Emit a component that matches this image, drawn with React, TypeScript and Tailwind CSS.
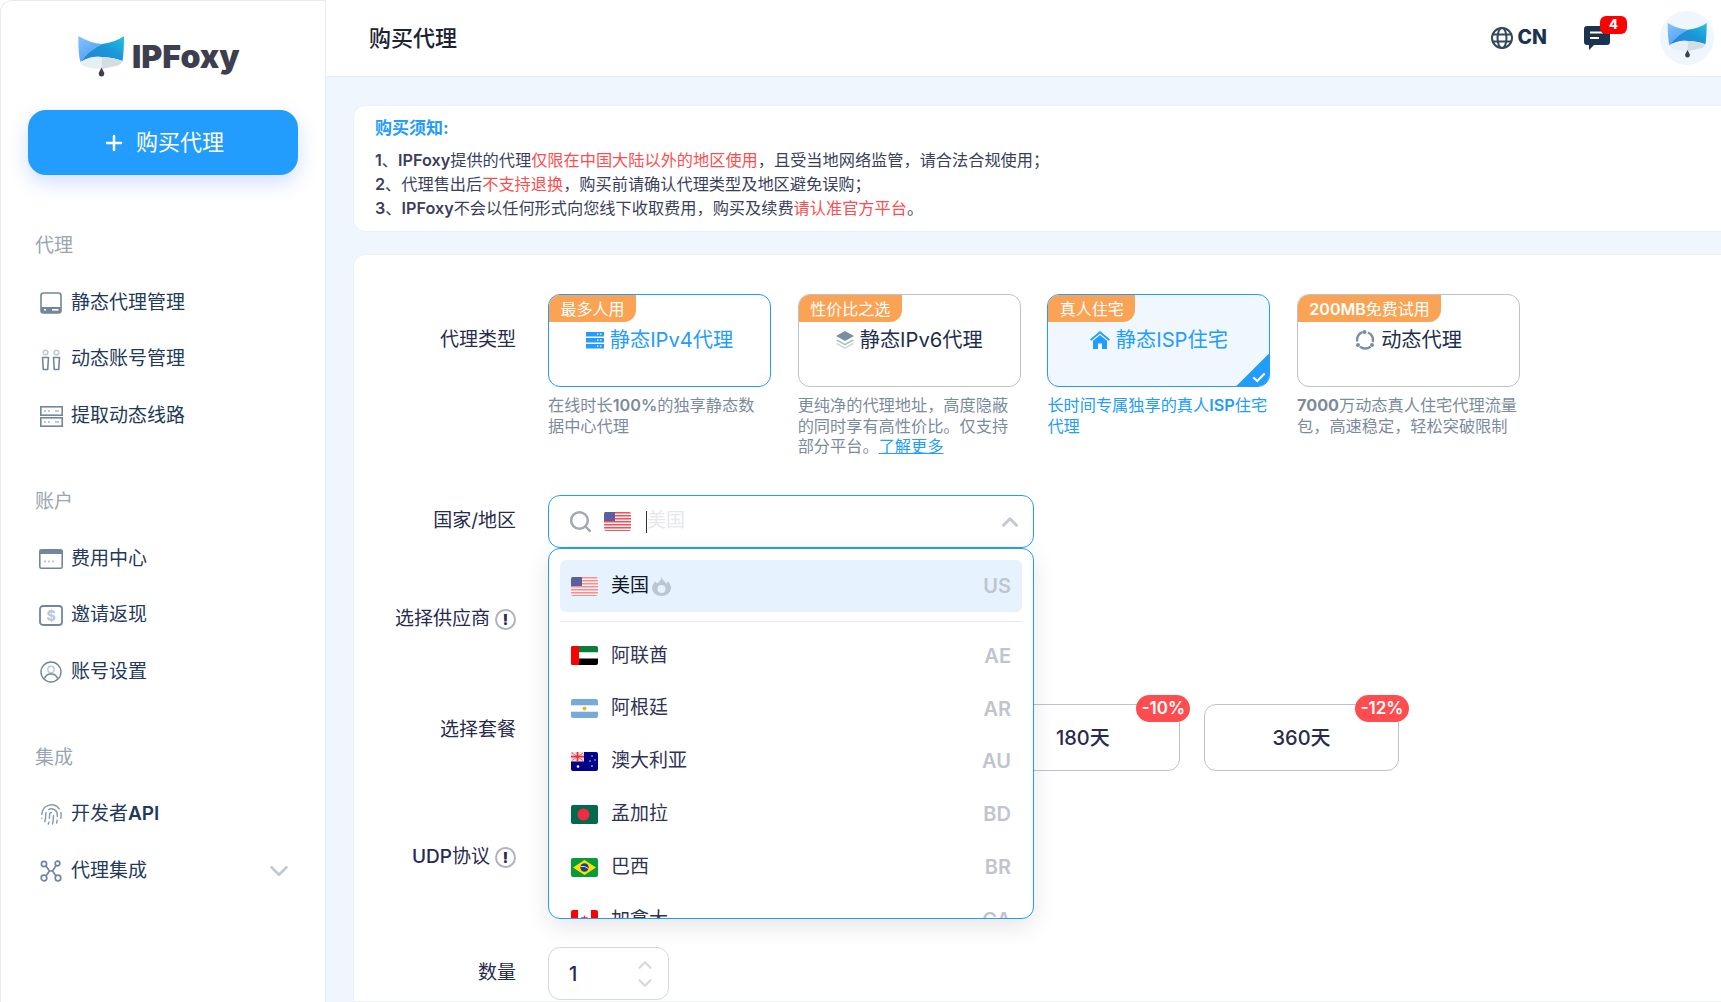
import { ChevronDown, ChevronUp, Fingerprint, Plus, Search } from "lucide-react";
import type { ReactNode } from "react";

function FoxLogo({ className }: { className: string }) {
  return (
    <svg viewBox="0 0 47 41" className={className}>
      <defs>
        <linearGradient id="foxLeft" x1="0" y1="0" x2="0.6" y2="1">
          <stop offset="0" stopColor="#86c3ff" />
          <stop offset="1" stopColor="#4a9ff0" />
        </linearGradient>
        <linearGradient id="foxArch" x1="0" y1="1" x2="1" y2="0">
          <stop offset="0" stopColor="#2a7fd8" />
          <stop offset="0.55" stopColor="#1a96d8" />
          <stop offset="1" stopColor="#22c4dc" />
        </linearGradient>
      </defs>
      <path d="M0.3 0 Q12 7 24 8 Q11 14 2.5 26 Q0.300 20 0.300 0 Z" fill="url(#foxLeft)" />
      <path d="M46 0 Q38 6 24 8 Q11 14 2.500 26 Q13 19.500 24 21 Q36 21.500 44.500 25 Q46 15 46 0 Z" fill="url(#foxArch)" />
      <path d="M2.500 26 Q13 19.500 24 21 L23.500 33 Q10 33 4 29 Z" fill="#e6f0f4" />
      <path d="M24 21 Q36 21.500 44.500 25 Q43 29 38 30 L23.500 33 Z" fill="#d4dde0" />
      <path d="M23.500 31.500 L26.300 37 Q26.300 40.500 23.500 40.500 Q20.700 40.500 20.700 37 Z" fill="#3d3f4f" />
    </svg>
  );
}

const ICON_DARK = "#73869c";
const ICON_LIGHT = "#bccad8";

function DriveIcon() {
  return (
    <svg viewBox="0 0 22 22" className="size-[22px]">
      <rect x="1" y="1" width="20" height="20" rx="2.5" fill="none" stroke={ICON_DARK} strokeWidth="1.6" />
      <path d="M1 15h20v3.5a2.5 2.5 0 0 1-2.5 2.5h-15A2.5 2.5 0 0 1 1 18.5Z" fill={ICON_DARK} />
      <rect x="4" y="17" width="2" height="1.6" fill="#fff" />
      <rect x="12" y="17" width="6.5" height="1.6" fill="#fff" />
    </svg>
  );
}

function AccountsIcon() {
  return (
    <svg viewBox="0 0 22 22" className="size-[22px]" fill="none">
      <circle cx="5.5" cy="3.5" r="2.3" stroke={ICON_LIGHT} strokeWidth="1.6" />
      <circle cx="16.5" cy="3.5" r="2.3" stroke={ICON_LIGHT} strokeWidth="1.6" />
      <path d="M2.5 8.5h6l-.8 12h-4.4Z" stroke={ICON_DARK} strokeWidth="1.6" strokeLinejoin="round" />
      <path d="M13.5 8.5h6l-.8 12h-4.4Z" stroke={ICON_DARK} strokeWidth="1.6" strokeLinejoin="round" />
    </svg>
  );
}

function ServerRowsIcon() {
  return (
    <svg viewBox="0 0 23 21" className="h-[21px] w-[23px]">
      <rect x="0.8" y="0.8" width="21.4" height="8.4" fill="none" stroke={ICON_DARK} strokeWidth="1.6" />
      <rect x="0.8" y="11.8" width="21.4" height="8.4" fill="none" stroke={ICON_DARK} strokeWidth="1.6" />
      <path d="M4 5h2M8 5h2M15 5h4M4 16h2M8 16h2M15 16h4" stroke={ICON_LIGHT} strokeWidth="2" />
    </svg>
  );
}

function BillingIcon() {
  return (
    <svg viewBox="0 0 24 20" className="h-[20px] w-[24px]">
      <rect x="0.8" y="0.8" width="22.4" height="18.4" rx="1.5" fill="none" stroke={ICON_DARK} strokeWidth="1.6" />
      <rect x="1" y="1" width="22" height="4" fill={ICON_DARK} />
      <path d="M5 12.5h2M9 12.5h2M13 12.5h2" stroke={ICON_LIGHT} strokeWidth="1.8" />
    </svg>
  );
}

function InviteIcon() {
  return (
    <svg viewBox="0 0 24 21" className="h-[21px] w-[24px]">
      <rect x="1" y="1" width="22" height="19" rx="3" fill="none" stroke={ICON_DARK} strokeWidth="1.8" />
      <text x="12" y="16" textAnchor="middle" fontSize="14" fontWeight="800" fill={ICON_LIGHT} fontFamily="Inter">
        $
      </text>
    </svg>
  );
}

function UserCircleIcon() {
  return (
    <svg viewBox="0 0 22 22" className="size-[22px]" fill="none">
      <circle cx="11" cy="11" r="10" stroke={ICON_DARK} strokeWidth="1.4" />
      <circle cx="11" cy="8.5" r="3.2" stroke={ICON_LIGHT} strokeWidth="1.4" />
      <path d="M4.5 17.5c1-3 3.5-4.5 6.5-4.5s5.500 1.500 6.500 4.500" stroke={ICON_DARK} strokeWidth="1.4" />
    </svg>
  );
}

function IntegrationIcon() {
  return (
    <svg viewBox="0 0 22 22" className="size-[22px]" fill="none" stroke={ICON_DARK} strokeWidth="1.7">
      <circle cx="4" cy="4" r="2.6" />
      <circle cx="17.500" cy="3.500" r="2.300" />
      <circle cx="4" cy="18" r="2.800" />
      <circle cx="18" cy="18" r="2.800" />
      <path d="M6 6l3.500 5-3.500 5M16 5.500l-3.500 5.500 3.500 5M9.500 11h3" />
    </svg>
  );
}

function InfoDot() {
  return (
    <span className="flex size-[21px] shrink-0 items-center justify-center rounded-full border-[2.500px] border-[#b0b3c1] text-[14px] leading-none font-black text-[#272b4d]">
      !
    </span>
  );
}

function ServerIcon() {
  return (
    <svg viewBox="0 0 18 17" className="h-[17px] w-[18px]">
      <path d="M0 0h18v4.500H0ZM0 6h18v4.500H0ZM0 12h18v4.500H0Z" fill="#229cfd" />
      <path d="M11 2.200h1.500M14 2.200h1.500M11 8.200h1.500M14 8.200h1.500M11 14.200h1.500M14 14.200h1.500" stroke="#fff" strokeWidth="1.300" />
    </svg>
  );
}

function LayersIcon() {
  return (
    <svg viewBox="0 0 18 18" className="size-[18px]">
      <path d="M9 0l9 5-9 5-9-5Z" fill="#7a8ea3" />
      <path d="M1.500 8.500L9 12.800l7.500-4.300L18 9.500l-9 5-9-5Z" fill="#aebccb" />
      <path d="M1.500 12L9 16.300l7.500-4.300L18 13l-9 5-9-5Z" fill="#ccd7e2" />
    </svg>
  );
}

function HouseIcon() {
  return (
    <svg viewBox="0 0 20 18" className="h-[18px] w-[20px]">
      <path d="M10 0L20 8.500l-1.300 1.300L10 2.500 1.300 9.800 0 8.500Z" fill="#229cfd" />
      <path d="M10 4l7 5.800V18h-5v-5.500H8V18H3V9.800Z" fill="#229cfd" />
    </svg>
  );
}

function RotationIcon() {
  return (
    <svg viewBox="0 0 20 20" className="size-[20px]" fill="none" stroke="#7a8ea3" strokeWidth="2.400">
      <path d="M7.500 2.200A8 8 0 0 0 2.200 11.500" />
      <path d="M13 2.500a8 8 0 0 1 4.800 9.500" />
      <path d="M5 16.600a8 8 0 0 0 10.500 0" />
      <circle cx="9.500" cy="2" r="2" fill="#7a8ea3" stroke="none" />
      <circle cx="3" cy="15" r="2" fill="#7a8ea3" stroke="none" />
      <circle cx="17" cy="15" r="2" fill="#7a8ea3" stroke="none" />
    </svg>
  );
}

function FlagUS({ muted }: { muted?: boolean }) {
  const stripe = muted ? "#f58f8f" : "#e8555c";
  return (
    <svg viewBox="0 0 27 19" className="h-[19px] w-[27px] rounded-[2px]">
      <rect width="27" height="19" fill="#fdf2f2" />
      {[0, 3, 6, 9, 12, 15, 18].map((y) => (
        <rect key={y} y={y} width="27" height="1.500" fill={stripe} />
      ))}
      <rect width="11" height="9" fill="#5c5f9f" />
    </svg>
  );
}

function FlagAE() {
  return (
    <svg viewBox="0 0 27 19" className="h-[19px] w-[27px] rounded-[2px]">
      <rect width="27" height="6.500" fill="#0c7d38" />
      <rect y="6.500" width="27" height="6" fill="#fff" />
      <rect y="12.500" width="27" height="6.500" fill="#000" />
      <rect width="8" height="19" fill="#f00" />
    </svg>
  );
}

function FlagAR() {
  return (
    <svg viewBox="0 0 27 19" className="h-[19px] w-[27px] rounded-[2px]">
      <rect width="27" height="19" fill="#75aadb" />
      <rect y="6.300" width="27" height="6.400" fill="#fff" />
      <circle cx="13.500" cy="9.500" r="2" fill="#f6b40e" />
    </svg>
  );
}

function FlagAU() {
  return (
    <svg viewBox="0 0 27 19" className="h-[19px] w-[27px] rounded-[2px]">
      <rect width="27" height="19" fill="#00008b" />
      <rect width="13" height="9.500" fill="#f3dede" />
      <path d="M6.500 0v9.500M0 4.700h13" stroke="#e8303c" strokeWidth="1.800" />
      <path d="M1 1l11 7.500M12 1L1 8.500" stroke="#e8303c" strokeWidth="0.700" />
      <circle cx="7" cy="14.500" r="1.300" fill="#fff" />
      <circle cx="21" cy="4" r="0.700" fill="#fff" />
      <circle cx="24" cy="8" r="0.700" fill="#fff" />
      <circle cx="19" cy="9" r="0.700" fill="#fff" />
      <circle cx="21" cy="14" r="0.800" fill="#fff" />
    </svg>
  );
}

function FlagBD() {
  return (
    <svg viewBox="0 0 27 19" className="h-[19px] w-[27px] rounded-[2px]">
      <rect width="27" height="19" fill="#006a4e" />
      <circle cx="12.500" cy="9.500" r="6" fill="#f42a41" />
    </svg>
  );
}

function FlagBR() {
  return (
    <svg viewBox="0 0 27 19" className="h-[19px] w-[27px] rounded-[2px]">
      <rect width="27" height="19" fill="#069c3a" />
      <path d="M13.500 2L25 9.500 13.500 17 2 9.500Z" fill="#fedf00" />
      <circle cx="13.500" cy="9.500" r="4.200" fill="#1d3f8f" />
      <path d="M9.500 8.500q4-1 8 2" stroke="#fff" strokeWidth="0.800" fill="none" />
    </svg>
  );
}

function FlagCA() {
  return (
    <svg viewBox="0 0 27 19" className="h-[19px] w-[27px] rounded-[2px]">
      <rect width="27" height="19" fill="#fff" />
      <rect width="7" height="19" fill="#f00" />
      <rect x="20" width="7" height="19" fill="#f00" />
      <path d="M13.500 5l1.200 2.500 2-.8-.8 4h-4.800l-.8-4 2 .8ZM13 11h1v3h-1Z" fill="#e8303c" />
    </svg>
  );
}

function NavItem({ icon, children, trailing }: { icon: ReactNode; children: ReactNode; trailing?: ReactNode }) {
  return (
    <div className="flex h-[56.700px] items-center text-[19px] text-[#23395a]">
      <span className="flex w-[70px] shrink-0 justify-end pr-[8px]">
        <span className="flex w-[24px] justify-center">{icon}</span>
      </span>
      <span className="flex-1">{children}</span>
      {trailing}
    </div>
  );
}

function NavHeading({ children }: { children: ReactNode }) {
  return <div className="flex h-[56.700px] items-center pl-[34px] text-[19px] text-[#9aa5b1]">{children}</div>;
}

function Sidebar() {
  return (
    <aside className="flex h-full w-[326px] shrink-0 flex-col rounded-tl-[12px] border-t border-r border-l border-[#e8eaee] bg-white">
      <div className="flex h-[109px] items-start gap-[7px] pt-[35px] pl-[77px]">
        <FoxLogo className="h-[41px] w-[47px]" />
        <span className="pt-[2px] text-[32px] leading-[38px] font-black text-[#3d3f4f]">IPFoxy</span>
      </div>
      <button className="mx-[27px] flex h-[65px] items-center justify-center gap-[10px] rounded-[18px] bg-[#229cfd] text-[22px] text-white shadow-[0_8px_20px_rgba(60,110,250,0.22)]">
        <Plus className="size-[24px]" strokeWidth={2.500} />
        购买代理
      </button>
      <div className="mt-[43px]">
        <NavHeading>代理</NavHeading>
        <NavItem icon={<DriveIcon />}>静态代理管理</NavItem>
        <NavItem icon={<AccountsIcon />}>动态账号管理</NavItem>
        <NavItem icon={<ServerRowsIcon />}>提取动态线路</NavItem>
      </div>
      <div className="mt-[29px]">
        <NavHeading>账户</NavHeading>
        <NavItem icon={<BillingIcon />}>费用中心</NavItem>
        <NavItem icon={<InviteIcon />}>邀请返现</NavItem>
        <NavItem icon={<UserCircleIcon />}>账号设置</NavItem>
      </div>
      <div className="mt-[29px]">
        <NavHeading>集成</NavHeading>
        <NavItem icon={<Fingerprint className="size-[23px] text-[#8b9aac]" strokeWidth={1.500} />}>
          开发者<span className="font-semibold">API</span>
        </NavItem>
        <NavItem
          icon={<IntegrationIcon />}
          trailing={<ChevronDown className="mr-[31px] size-[30px] text-[#c0c8d2]" strokeWidth={2} />}
        >
          代理集成
        </NavItem>
      </div>
    </aside>
  );
}

function TopBar() {
  return (
    <header className="flex h-[77px] shrink-0 items-center border-b border-[#e9edf2] bg-white pl-[43px]">
      <h1 className="flex-1 text-[22px] font-medium text-[#1c2433]">购买代理</h1>
      <svg viewBox="0 0 22 22" className="size-[22px]" fill="none" stroke="#33475f" strokeWidth="2">
        <circle cx="11" cy="11" r="10" />
        <ellipse cx="11" cy="11" rx="4.500" ry="10" />
        <path d="M1.500 7.500h19M1.500 14.500h19" />
      </svg>
      <span className="ml-[5px] text-[19.500px] font-extrabold text-[#1c3350]">CN</span>
      <div className="relative ml-[37px] h-[24px] w-[26px]">
        <svg viewBox="0 0 26 24" className="h-[24px] w-[26px]">
          <path d="M3 0h20a3 3 0 0 1 3 3v13a3 3 0 0 1-3 3H10l-5 5v-5H3a3 3 0 0 1-3-3V3a3 3 0 0 1 3-3Z" fill="#1c3350" />
          <path d="M6 6.500h13M6 12h9" stroke="#fff" strokeWidth="2" />
        </svg>
        <span className="absolute top-[-10px] left-[16px] flex h-[18px] w-[27px] items-center justify-center rounded-[6px] bg-[#f00] text-[13px] font-extrabold text-white">
          4
        </span>
      </div>
      <div className="mr-[7px] ml-[50px] flex size-[54px] items-center justify-center rounded-full bg-[#eff6fe] pt-[4px]">
        <FoxLogo className="h-[35px] w-[41px]" />
      </div>
    </header>
  );
}

function Notice() {
  return (
    <section className="mt-[28px] mr-[-20px] ml-[27px] rounded-l-[12px] border border-[#edf0f4] bg-white pt-[10px] pb-[11px] pl-[21px] text-[16.200px] leading-[24px] text-[#3a3f5c]">
      <div className="mb-[8px] text-[17px] font-bold text-[#229cfd]">购买须知:</div>
      <p>
        <span className="font-semibold">1</span>、<span className="font-semibold">IPFoxy</span>提供的代理
        <span className="text-[#ff4d4f]">仅限在中国大陆以外的地区使用</span>，且受当地网络监管，请合法合规使用；
      </p>
      <p>
        <span className="font-semibold">2</span>、代理售出后<span className="text-[#ff4d4f]">不支持退换</span>
        ，购买前请确认代理类型及地区避免误购；
      </p>
      <p>
        <span className="font-semibold">3</span>、<span className="font-semibold">IPFoxy</span>
        不会以任何形式向您线下收取费用，购买及续费<span className="text-[#ff4d4f]">请认准官方平台</span>。
      </p>
    </section>
  );
}

function TypeCard({
  tag,
  tagWidth,
  icon,
  title,
  desc,
  state,
}: {
  tag: ReactNode;
  tagWidth: string;
  icon: ReactNode;
  title: ReactNode;
  desc: ReactNode;
  state: "idle" | "hover" | "active";
}) {
  const border = state === "idle" ? "border-[#bfc1cc] text-[#1e2f4d]" : "border-[#229cfd] text-[#229cfd]";
  return (
    <div className="w-[223px]">
      <div
        className={`relative flex h-[93px] justify-center overflow-hidden rounded-[12px] border pt-[29px] ${border} ${
          state === "active" ? "bg-[#f0f7ff]" : "bg-white"
        }`}
      >
        <span
          className={`absolute top-0 left-0 flex h-[27px] items-center justify-center rounded-br-[12px] bg-[#fba354] text-[16px] text-white ${tagWidth}`}
        >
          {tag}
        </span>
        <span className="flex h-[32px] items-center gap-[6px] text-[20.200px]">
          {icon}
          {title}
        </span>
        {state === "active" && (
          <span className="absolute right-0 bottom-0 size-[33px] bg-[#229cfd] [clip-path:polygon(100%_0,100%_100%,0_100%)]">
            <svg viewBox="0 0 16 12" className="absolute right-[3px] bottom-[3px] h-[11px] w-[14px]" fill="none" stroke="#fff" strokeWidth="2.600">
              <path d="M1.500 6l4.500 4 8.500-8.500" />
            </svg>
          </span>
        )}
      </div>
      <p className={`mt-[8px] text-[16.200px] leading-[20.500px] ${state === "active" ? "text-[#229cfd]" : "text-[#7c8b9c]"}`}>{desc}</p>
    </div>
  );
}

function FormLabel({ children, info, tall }: { children: ReactNode; info?: boolean; tall?: boolean }) {
  return (
    <div
      className={`flex w-[162px] shrink-0 items-center justify-end gap-[5px] text-[19px] text-[#272b4d] ${
        tall ? "h-[93px]" : "h-[53px]"
      }`}
    >
      <span>{children}</span>
      {info && <InfoDot />}
    </div>
  );
}

const COUNTRIES: { name: string; code: string; flag: ReactNode }[] = [
  { name: "阿联酋", code: "AE", flag: <FlagAE /> },
  { name: "阿根廷", code: "AR", flag: <FlagAR /> },
  { name: "澳大利亚", code: "AU", flag: <FlagAU /> },
  { name: "孟加拉", code: "BD", flag: <FlagBD /> },
  { name: "巴西", code: "BR", flag: <FlagBR /> },
  { name: "加拿大", code: "CA", flag: <FlagCA /> },
];

function CountrySelect() {
  return (
    <div className="relative z-10 h-[53px] w-[486px]">
      <div className="flex h-[53px] items-center rounded-[12px] border border-[#229cfd] bg-white pr-[10px] pl-[19px]">
        <Search className="size-[25px] text-[#a3a7b6]" strokeWidth={2.400} />
        <span className="ml-[11px] flex">
          <FlagUS />
        </span>
        <span className="ml-[15px] h-[22px] w-px bg-[#272b4d]" />
        <span className="flex-1 text-[19px] text-[#e6e7ea]">美国</span>
        <ChevronUp className="size-[26px] text-[#c4c8d0]" strokeWidth={2.800} />
      </div>
      <div className="absolute top-full left-0 h-[371px] w-full overflow-hidden rounded-[12px] border border-[#229cfd] bg-white px-[11px] pt-[11px] shadow-[0_8px_24px_rgba(0,0,0,0.1)]">
        <div className="flex h-[52px] items-center rounded-[6px] bg-[#e6f3fe] px-[11px]">
          <FlagUS muted />
          <span className="ml-[13px] text-[19px] text-[#111827]">美国</span>
          <svg viewBox="0 0 19 19" className="ml-[3px] size-[19px]">
            <path
              d="M9.500 0C10 3 13 4 14 6.500C15 6 15.500 5 15.500 4C18 6.500 19 9 19 11A9.500 8 0 0 1 0 11C0 8 2 6 3.500 4.500C4 5.500 4.500 6 5.500 6.500C7 4.500 9.500 3 9.500 0Z"
              fill="#bcc6d0"
            />
            <circle cx="9.500" cy="12" r="4" fill="#e6f3fe" />
          </svg>
          <span className="ml-auto text-[20px] font-semibold text-[#c1c4d0]">US</span>
        </div>
        <div className="mt-[9px] mb-[7.500px] h-px bg-[#e8e9ec]" />
        {COUNTRIES.map((c) => (
          <div key={c.code} className="flex h-[52.800px] items-center px-[11px]">
            {c.flag}
            <span className="ml-[13px] text-[19px] text-[#2f3354]">{c.name}</span>
            <span className="ml-auto text-[20px] font-semibold text-[#c1c4d0]">{c.code}</span>
          </div>
        ))}
      </div>
    </div>
  );
}

function PlanButton({ label, discount }: { label?: string; discount?: string }) {
  return (
    <div className="relative flex h-[67px] w-[195px] items-center justify-center rounded-[12px] border border-[#bfc1cc] text-[20px] font-medium text-[#272b4d]">
      {label}
      {discount && (
        <span className="absolute top-[-10px] right-[-11px] flex h-[27px] w-[54px] items-center justify-center rounded-[14px] bg-[#ff4d4f] text-[17px] font-semibold text-white">
          {discount}
        </span>
      )}
    </div>
  );
}

function PurchaseForm() {
  return (
    <section className="mt-[22px] mr-[-20px] ml-[27px] flex-1 rounded-tl-[12px] border border-[#edf0f4] bg-white pt-[39px]">
      <div className="flex gap-[32px]">
        <FormLabel tall>代理类型</FormLabel>
        <div className="flex h-[164px] gap-[26.700px]">
          <TypeCard
            state="hover"
            tag="最多人用"
            tagWidth="w-[87px]"
            icon={<ServerIcon />}
            title="静态IPv4代理"
            desc={
              <>
                在线时长<span className="font-semibold">100%</span>的独享静态数
                <br />
                据中心代理
              </>
            }
          />
          <TypeCard
            state="idle"
            tag="性价比之选"
            tagWidth="w-[103px]"
            icon={<LayersIcon />}
            title="静态IPv6代理"
            desc={
              <>
                更纯净的代理地址，高度隐蔽的同时享有高性价比。仅支持部分平台。
                <a className="text-[#229cfd] underline">了解更多</a>
              </>
            }
          />
          <TypeCard
            state="active"
            tag="真人住宅"
            tagWidth="w-[87px]"
            icon={<HouseIcon />}
            title="静态ISP住宅"
            desc={
              <>
                长时间专属独享的真人<span className="font-semibold">ISP</span>住宅代理
              </>
            }
          />
          <TypeCard
            state="idle"
            tag={
              <>
                <span className="font-semibold">200MB</span>免费试用
              </>
            }
            tagWidth="w-[143px]"
            icon={<RotationIcon />}
            title="动态代理"
            desc={
              <>
                <span className="font-bold">7000</span>万动态真人住宅代理流量包，高速稳定，轻松突破限制
              </>
            }
          />
        </div>
      </div>
      <div className="mt-[37px] flex gap-[32px]">
        <FormLabel>国家/地区</FormLabel>
        <CountrySelect />
      </div>
      <div className="mt-[45px] flex gap-[32px]">
        <FormLabel info>选择供应商</FormLabel>
      </div>
      <div className="mt-[58px] flex gap-[32px]">
        <FormLabel>选择套餐</FormLabel>
        <div className="flex gap-[23.700px]">
          <PlanButton />
          <PlanButton />
          <PlanButton label="180天" discount="-10%" />
          <PlanButton label="360天" discount="-12%" />
        </div>
      </div>
      <div className="mt-[60px] flex gap-[32px]">
        <FormLabel info>
          <span className="font-medium">UDP</span>协议
        </FormLabel>
      </div>
      <div className="mt-[63px] flex gap-[32px]">
        <FormLabel>数量</FormLabel>
        <div className="flex h-[53px] w-[121px] items-center justify-between rounded-[12px] border border-[#d5d7de] pr-[12px] pl-[20px] text-[20px] font-medium text-[#272b4d]">
          1
          <span className="flex flex-col text-[#d5d8de]">
            <ChevronUp className="mb-[-4px] size-[22px]" strokeWidth={2.500} />
            <ChevronDown className="size-[22px]" strokeWidth={2.500} />
          </span>
        </div>
      </div>
    </section>
  );
}

export default function App() {
  return (
    <div className="flex h-screen overflow-hidden bg-white font-['Inter','Noto_Sans_CJK_SC',sans-serif]">
      <Sidebar />
      <div className="flex min-w-0 flex-1 flex-col overflow-hidden bg-[#f0f6fe]">
        <TopBar />
        <Notice />
        <PurchaseForm />
      </div>
    </div>
  );
}
